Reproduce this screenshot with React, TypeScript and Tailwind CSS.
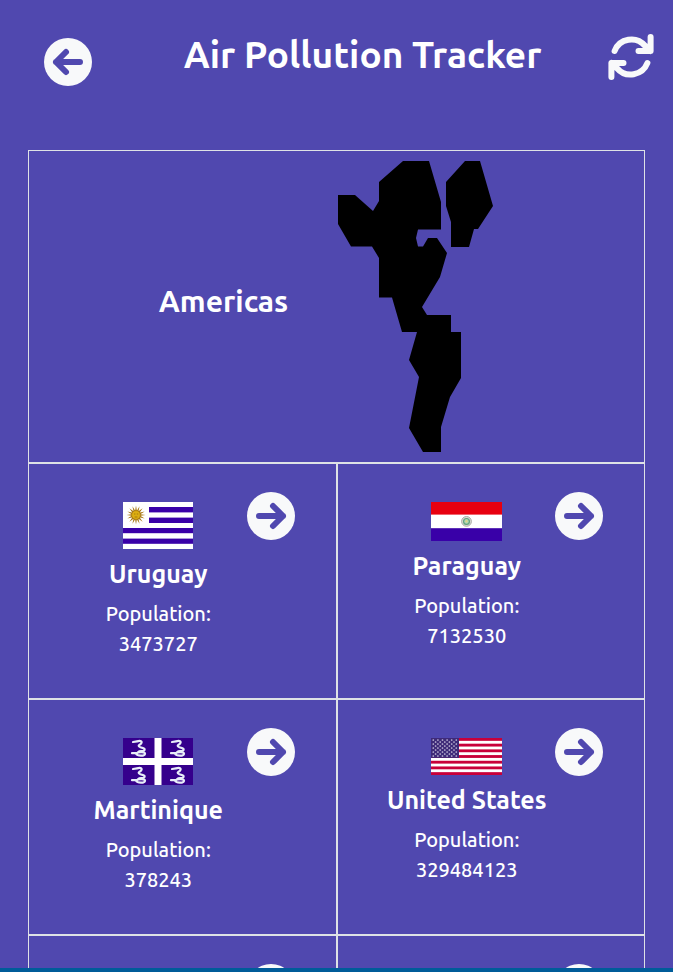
import type { ReactNode } from 'react';

type Country = { name: string; population: number; flag: ReactNode };

function UruguayFlag() {
  const rays = Array.from({ length: 16 }, (_, i) => i * 22.5);
  return (
    <svg viewBox="0 0 70 47" className="h-[47px] w-[70px]" role="img" aria-label="Flag of Uruguay">
      <rect width="70" height="47" fill="#fff" />
      <g fill="#3900a8">
        <rect x="26" y="5" width="44" height="5.4" />
        <rect x="26" y="15.6" width="44" height="5.4" />
        <rect y="26" width="70" height="5.2" />
        <rect y="36.6" width="70" height="5.2" />
      </g>
      {rays.map((r) => (
        <path key={r} d="M11.4 13 13 3.6 14.6 13z" fill="#a87812" transform={`rotate(${r} 13 13)`} />
      ))}
      <circle cx="13" cy="13" r="4.4" fill="#dcae10" stroke="#a87812" strokeWidth="0.7" />
      <path d="M11 12h1.4M13.8 12h1.4M11.6 15h2.8" stroke="#8f6410" strokeWidth="0.7" />
    </svg>
  );
}

function ParaguayFlag() {
  return (
    <svg viewBox="0 0 71 39" className="h-[39px] w-[71px]" role="img" aria-label="Flag of Paraguay">
      <rect width="71" height="39" fill="#fff" />
      <rect width="71" height="12.6" fill="#e80010" />
      <rect y="26.2" width="71" height="12.8" fill="#3900a8" />
      <circle cx="35.5" cy="19.4" r="4.9" fill="#d9dcd6" stroke="#a4a49e" strokeWidth="0.9" />
      <circle cx="35.5" cy="19.4" r="2.9" fill="#b4d6b4" stroke="#5fa37c" strokeWidth="1.2" />
      <circle cx="35.5" cy="19.2" r="1" fill="#e5dc78" />
    </svg>
  );
}

function MartiniqueFlag() {
  const spots = [[10, 1], [49, 1], [10, 28], [49, 28]];
  return (
    <svg viewBox="0 0 70 47" className="h-[47px] w-[70px]" role="img" aria-label="Flag of Martinique">
      <rect width="70" height="47" fill="#35008c" />
      <path d="M35 0v47M0 23.5h70" stroke="#fff" strokeWidth="7" />
      {spots.map(([x, y]) => (
        <g key={`${x}-${y}`} transform={`translate(${x} ${y})`} fill="none" stroke="#e8eef8" strokeLinecap="round">
          <path d="M0 3 4 2.4M4 2.4C8 .8 10 3.2 7.6 5 5 6.6 5 7.4 7.4 8.2 11 9.2 12.6 10 11 11.6 9 12.8 6.6 11.6 5.4 13" strokeWidth="2.2" />
          <path d="M-1 14.2 3 14M3 14.6C5 12.6 12 12.4 12 14.8 11.6 17.4 4.4 17.2 3 14.8" strokeWidth="2.2" />
        </g>
      ))}
    </svg>
  );
}

function UnitedStatesFlag() {
  const stripes = Array.from({ length: 7 }, (_, i) => i);
  const stars = Array.from({ length: 9 }, (_, row) =>
    Array.from({ length: row % 2 ? 5 : 6 }, (_, col) => ({
      x: (row % 2 ? 4.6 : 2.3) + col * 4.6,
      y: 2 + row * 2,
    })),
  ).flat();
  return (
    <svg viewBox="0 0 71 37" className="h-[37px] w-[71px]" role="img" aria-label="Flag of the United States">
      <rect width="71" height="37" fill="#fff" />
      {stripes.map((i) => (
        <rect key={i} y={i * 5.692} width="71" height="2.846" fill="#c8003a" />
      ))}
      <rect width="28" height="19.9" fill="#3e2a78" />
      {stars.map((s) => (
        <circle key={`${s.x}-${s.y}`} cx={s.x} cy={s.y} r="0.85" fill="#c9c3dc" />
      ))}
    </svg>
  );
}

function AmericasMap() {
  return (
    <svg viewBox="338 161 176 291" className="h-[291px] w-[176px] shrink-0" role="img" aria-label="Map of the Americas">
      <path d="M338 195H355L373 211 379 201V182L403 161H429L441 202V229.5H418L416 238 418 246.5H423L428 238H437L447 253 440 277 422 307 427 315H451V332H461V378L450 397 441 427V452H423L409 428 419 377 409 360 417 332H402L392 297.5H379V258L372 246.5H351L338 224Z" />
      <path d="M465 161H480L493 206 478 229H474L469 247H451V222L446 206V182Z" />
    </svg>
  );
}

function ArrowCircle({ arrow }: { arrow: string }) {
  return (
    <svg viewBox="0 0 48 48" className="size-12" fill="none" aria-hidden="true">
      <circle cx="24" cy="24" r="24" fill="#f8f9fa" />
      <path d={arrow} stroke="#5048af" strokeWidth="6" strokeLinecap="round" strokeLinejoin="round" />
    </svg>
  );
}

function RefreshIcon() {
  return (
    <svg viewBox="0 0 48 48" className="size-12" fill="none" stroke="#f8f9fa" strokeWidth="6" strokeLinecap="round" strokeLinejoin="round" aria-hidden="true">
      <path d="M7.6 18A18 18 0 0 1 38 12.8L43.5 18M43.6 4V18H31.5" />
      <path d="M40.4 30A18 18 0 0 1 10 35.2L4.5 30M4.4 44V30H16.5" />
    </svg>
  );
}

const countries: Country[] = [
  { name: 'Uruguay', population: 3473727, flag: <UruguayFlag /> },
  { name: 'Paraguay', population: 7132530, flag: <ParaguayFlag /> },
  { name: 'Martinique', population: 378243, flag: <MartiniqueFlag /> },
  { name: 'United States', population: 329484123, flag: <UnitedStatesFlag /> },
];

function CountryCard({ country }: { country?: Country }) {
  return (
    <li className="flex min-h-[236px] items-start border border-[#dee2e6] px-[41px] pt-7">
      <div className="flex min-w-0 flex-1 flex-col items-center pt-[10px] text-center">
        {country && (
          <>
            {country.flag}
            <h3 className="my-2 text-[25px] leading-[34px] font-semibold whitespace-nowrap">{country.name}</h3>
            <p className="text-[20px] leading-[30px] font-medium">
              Population:
              <br />
              {country.population}
            </p>
          </>
        )}
      </div>
      <button type="button" aria-label="Details" className="shrink-0 rounded-full">
        <ArrowCircle arrow="M12 24H36M26 14 36 24 26 34" />
      </button>
    </li>
  );
}

export default function App() {
  return (
    <div className="flex h-screen flex-col bg-[#5048af] font-['Ubuntu','Noto_Sans',sans-serif] text-white">
      <div className="min-h-0 flex-1 overflow-y-auto [scrollbar-width:none]">
        <header className="flex items-start pt-[33px] pr-[18px] pb-16 pl-11">
          <button type="button" aria-label="Back" className="mt-[5px] rounded-full">
            <ArrowCircle arrow="M36 24H12M22 14 12 24 22 34" />
          </button>
          <h1 className="flex-1 pl-[26px] text-center text-[37px] leading-[44px] font-semibold">
            Air Pollution Tracker
          </h1>
          <button type="button" aria-label="Refresh">
            <RefreshIcon />
          </button>
        </header>
        <main className="mx-7">
          <section className="flex items-center justify-center gap-[50px] border border-[#dee2e6] py-[10px]">
            <h2 className="mb-3 text-[30px] leading-9 font-semibold">Americas</h2>
            <AmericasMap />
          </section>
          <ul className="grid grid-cols-2">
            {countries.map((c) => (
              <CountryCard key={c.name} country={c} />
            ))}
            <CountryCard />
            <CountryCard />
          </ul>
        </main>
      </div>
      <div className="h-1 shrink-0 bg-[#005c99]" />
    </div>
  );
}
